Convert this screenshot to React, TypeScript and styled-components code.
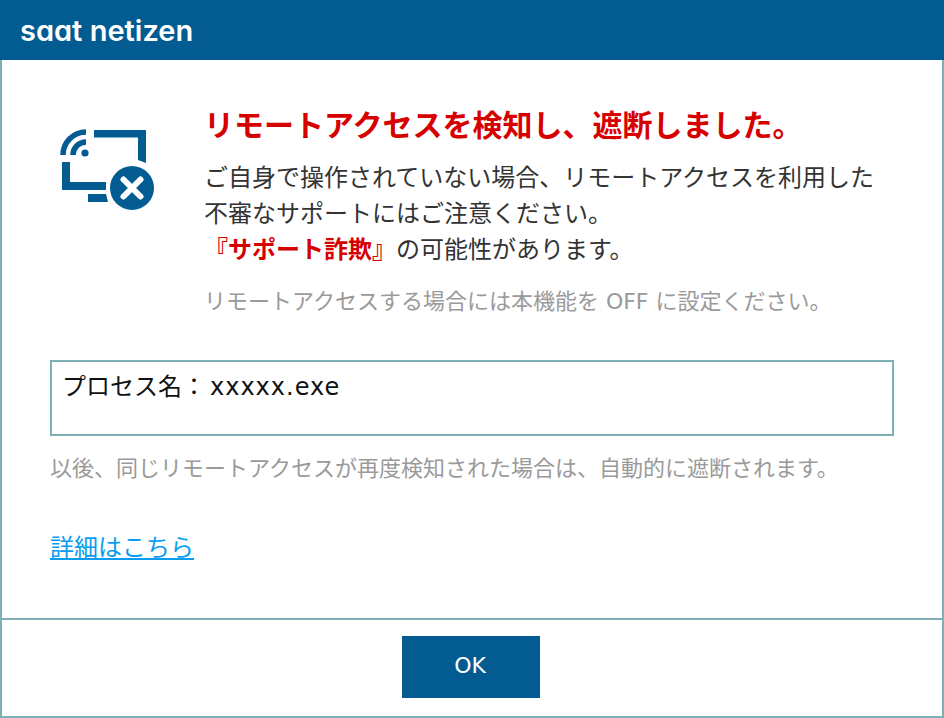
import React from "react";
import styled, { createGlobalStyle } from "styled-components";

const GlobalStyle = createGlobalStyle`
html, body {
    margin: 0;
    padding: 0;
    background: #fff;
}
* {
    box-sizing: border-box;
}
`;

const Dialog = styled.div`
width: 944px;
height: 718px;
display: flex;
flex-direction: column;
background: #fff;
border: solid #7fb0b4;
border-width: 0 2px 2px 2px;
font-family: "DejaVu Sans", "Noto Sans CJK JP", sans-serif;
color: #333;
`;

const Header = styled.header`
height: 60px;
margin: 0 -2px;
padding: 0 20px;
flex: none;
display: flex;
align-items: center;
background: #025c92;
`;

const Brand = styled.span`
font-family: "Inter", sans-serif;
font-feature-settings: "cv11" 1;
font-size: 29px;
font-weight: 600;
line-height: 1;
letter-spacing: 0;
color: #fff;
`;

const Body = styled.main`
flex: 1;
padding: 68px 48px 0 48px;
`;

const Notice = styled.section`
display: flex;
align-items: flex-start;
`;

const IconSlot = styled.div`
width: 154px;
padding: 0 0 0 10px;
flex: none;
svg {
    display: block;
}
`;

const NoticeText = styled.div`
flex: 1;
margin-top: -24px;
`;

const Title = styled.h1`
margin: 0 0 12px 0;
font-size: 30px;
line-height: 44px;
font-weight: 700;
color: #d60000;
white-space: nowrap;
`;

const Message = styled.p`
margin: 0;
font-size: 24px;
line-height: 36px;
white-space: nowrap;
`;

const Alert = styled.strong`
font-weight: 700;
color: #d60000;
`;

const Hint = styled.p<{ $top: number }>`
margin: ${props => props.$top}px 0 0 0;
font-size: 22px;
line-height: 32px;
color: #9a9a9a;
white-space: nowrap;
`;

const ProcessBox = styled.div`
height: 76px;
margin-top: 42px;
padding: 7px 10px;
border: 2px solid #7fb0b4;
font-size: 24px;
line-height: 36px;
color: #111;
`;

const FileName = styled.span`
margin-left: 4px;
letter-spacing: 1px;
`;

const DetailLink = styled.a`
display: inline-block;
margin-top: 45px;
font-size: 24px;
line-height: 36px;
color: #0a9cf0;
text-decoration: underline;
`;

const Footer = styled.footer`
height: 98px;
flex: none;
display: flex;
justify-content: center;
padding: 16px 2px 0 0;
border-top: 2px solid #7fb0b4;
`;

const OkButton = styled.button`
width: 138px;
height: 62px;
padding: 0 2px 3px 0;
border: none;
background: #025c92;
color: #fff;
font-family: inherit;
font-size: 22px;
`;

const RemoteBlockedIcon = () => (
    <svg width="96" height="84" viewBox="0 0 96 84" fill="none">
        <g fill="#025c92">
            <path d="M34 2h52v33l-8-3V9.500H34z" />
            <path d="M2 34h8v20h36v8H2z" />
            <path d="M28 66h18l2 8H28z" />
            <circle cx="25" cy="25" r="3.600" />
            <circle cx="72" cy="60" r="22" />
        </g>
        <g stroke="#025c92" strokeWidth="5.500">
            <path d="M3 27a23 23 0 0 1 23-23" />
            <path d="M13 27a13 13 0 0 1 13-13" />
        </g>
        <path d="M63.500 51.500l17 17M80.500 51.500l-17 17" stroke="#fff" strokeWidth="6" strokeLinecap="round" />
    </svg>
);

export default function App() {
    return <Dialog>
        <GlobalStyle />
        <Header>
            <Brand>saat netizen</Brand>
        </Header>
        <Body>
            <Notice>
                <IconSlot><RemoteBlockedIcon /></IconSlot>
                <NoticeText>
                    <Title>リモートアクセスを検知し、遮断しました。</Title>
                    <Message>ご自身で操作されていない場合、リモートアクセスを利用した</Message>
                    <Message>不審なサポートにはご注意ください。</Message>
                    <Message><Alert>『サポート詐欺』</Alert>の可能性があります。</Message>
                    <Hint $top={18}>リモートアクセスする場合には本機能を OFF に設定ください。</Hint>
                </NoticeText>
            </Notice>
            <ProcessBox>プロセス名：<FileName>xxxxx.exe</FileName></ProcessBox>
            <Hint $top={17}>以後、同じリモートアクセスが再度検知された場合は、自動的に遮断されます。</Hint>
            <DetailLink href="#">詳細はこちら</DetailLink>
        </Body>
        <Footer>
            <OkButton>OK</OkButton>
        </Footer>
    </Dialog>;
}
